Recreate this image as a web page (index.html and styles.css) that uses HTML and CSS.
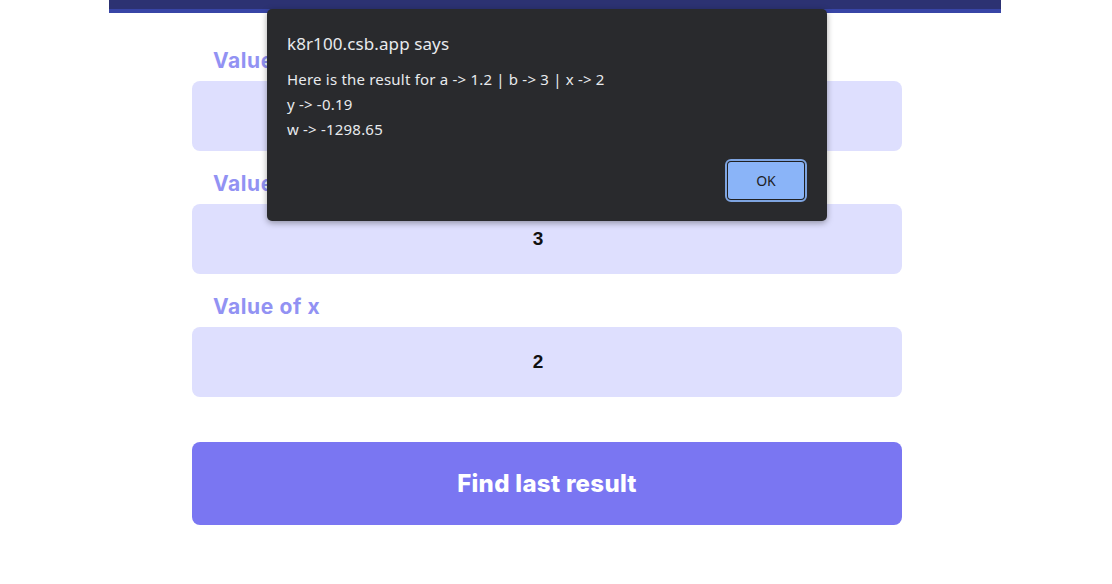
FILE: index.html
```html
<!DOCTYPE html>
<html>
<head>
<meta charset="utf-8">
<link rel="stylesheet" href="styles.css">
</head>
<body>
<div class="page">
  <div class="topbar"></div>
  <form class="form">
    <label class="label">Value of a</label>
    <div class="field">1.2</div>
    <label class="label">Value of b</label>
    <div class="field">3</div>
    <label class="label">Value of x</label>
    <div class="field">2</div>
    <button type="button" class="submit">Find last result</button>
  </form>
</div>
<div class="dialog">
  <div class="dialog-title">k8r100.csb.app says</div>
  <div class="dialog-msg">
    <div>Here is the result for a -&gt; 1.2 | b -&gt; 3 | x -&gt; 2</div>
    <div>y -&gt; -0.19</div>
    <div>w -&gt; -1298.65</div>
  </div>
  <div class="dialog-actions">
    <button type="button" class="ok">OK</button>
  </div>
</div>
</body>
</html>
```
FILE: styles.css
```css
html, body {
  margin: 0;
  padding: 0;
  background: #ffffff;
}
body {
  width: 1112px;
  height: 584px;
  overflow: hidden;
  position: relative;
}
.page {
  width: 892px;
  margin-left: 109px;
}
.topbar {
  height: 9px;
  background: #2c3272;
  border-bottom: 4px solid #3845a6;
}
.form {
  width: 710px;
  margin-left: 83px;
  display: flex;
  flex-direction: column;
  padding-top: 33px;
}
.label {
  font-family: Inter, "Noto Sans", sans-serif;
  font-weight: 700;
  font-size: 21px;
  line-height: 30px;
  color: #9292f3;
  padding-left: 21px;
  margin-top: 18px;
  margin-bottom: 5px;
  letter-spacing: 0.6px;
}
.label:first-child {
  margin-top: 0;
}
.field {
  height: 70px;
  border-radius: 8px;
  background: #dedffe;
  display: flex;
  align-items: center;
  justify-content: center;
  padding-right: 18px;
  font-family: "Liberation Sans", Arial, sans-serif;
  font-weight: 700;
  font-size: 19px;
  color: #111111;
}
.submit {
  margin-top: 45px;
  height: 83px;
  border: none;
  border-radius: 8px;
  background: #7a76f2;
  color: #ffffff;
  font-family: Inter, "Noto Sans", sans-serif;
  font-weight: 800;
  font-size: 24px;
  letter-spacing: 0.3px;
  padding: 0;
}
.dialog {
  position: absolute;
  left: 267px;
  top: 9px;
  width: 560px;
  height: 212px;
  box-sizing: border-box;
  background: #292a2d;
  border-radius: 5px;
  box-shadow: 0 2px 6px rgba(0, 0, 0, 0.35);
  padding: 23px 20px 20px 20px;
  display: flex;
  flex-direction: column;
  font-family: "Noto Sans", "Open Sans", sans-serif;
  color: #e8eaed;
}
.dialog-title {
  font-size: 17px;
  line-height: 24px;
  letter-spacing: 0.1px;
}
.dialog-msg {
  margin-top: 11px;
  font-size: 15px;
  line-height: 25px;
  letter-spacing: 0.2px;
}
.dialog-actions {
  margin-top: auto;
  display: flex;
  justify-content: flex-end;
}
.ok {
  width: 80px;
  height: 41px;
  box-sizing: border-box;
  background: #8ab4f8;
  border: 2px solid #1f2022;
  outline: 2px solid #7ea4e0;
  outline-offset: -1px;
  border-radius: 5px;
  color: #202124;
  font-family: "Noto Sans", "Open Sans", sans-serif;
  font-size: 14px;
  margin-right: 1px;
}
```
